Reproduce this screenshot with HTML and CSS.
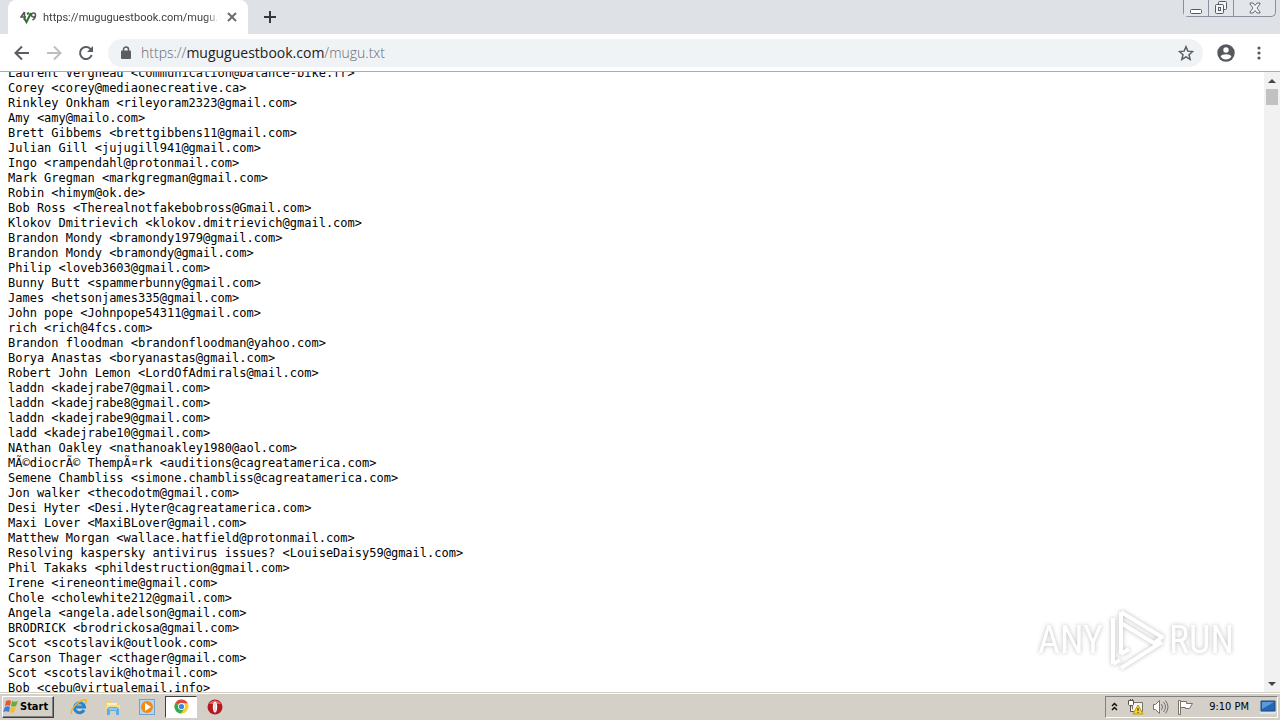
FILE: index.html
```html
<!DOCTYPE html>
<html lang="en">
<head>
  <meta charset="UTF-8">
  <meta name="viewport" content="width=device-width, initial-scale=1.0">
  <title>https://muguguestbook.com/mugu.txt</title>
  <link rel="stylesheet" href="styles.css">
</head>
<body>

  <!-- Tab strip -->
  <header class="tab-strip">
    <div class="tab">
      <svg class="favicon" width="17" height="14" viewBox="0 0 17 14">
        <path d="M4.500 2L1 7h5M4.500 2v8M15.500 5a2 2 0 1 0-4 0 2 2 0 0 0 4 0c0 3-1 4-3 5" fill="none" stroke="#555" stroke-width="1.500"/>
        <path d="M4 8l2.500 4L11 3M7 4l2-1" fill="none" stroke="#28702c" stroke-width="2"/>
      </svg>
      <span class="tab-title">https://muguguestbook.com/mugu.txt</span>
      <button class="icon-btn tab-close" aria-label="Close tab">
        <svg width="10" height="10" viewBox="0 0 10 10"><path d="M1 1l8 8M9 1L1 9" stroke="#6a6d71" stroke-width="2"/></svg>
      </button>
    </div>
    <button class="icon-btn new-tab" aria-label="New tab">
      <svg width="12" height="12" viewBox="0 0 12 12"><path d="M6 0v12M0 6h12" stroke="#35383c" stroke-width="2"/></svg>
    </button>
    <div class="window-buttons">
      <button class="win-btn" aria-label="Minimize">
        <svg width="12" height="14" viewBox="0 0 12 14"><rect x=".5" y="8.500" width="11" height="4" rx="1" fill="#fff" stroke="#555a66"/></svg>
      </button>
      <button class="win-btn" aria-label="Restore">
        <svg width="14" height="14" viewBox="0 0 14 14"><rect x="4.500" y=".5" width="8" height="8" rx="1" fill="#f4f5f7" stroke="#555a66"/><rect x="1.500" y="3.500" width="8" height="9" rx="1" fill="#f4f5f7" stroke="#555a66"/><rect x="4.500" y="6.500" width="2" height="3" fill="none" stroke="#555a66"/></svg>
      </button>
      <button class="win-btn win-close" aria-label="Close">
        <svg width="12" height="12" viewBox="0 0 12 12"><path d="M1 1h3l2 2.500L8 1h3v1L8 6l3 4v1H8L6 8.500 4 11H1v-1l3-4-3-4z" fill="#f4f5f7" stroke="#666b76"/></svg>
      </button>
    </div>
  </header>

  <!-- Toolbar -->
  <nav class="toolbar">
    <button class="icon-btn" aria-label="Back">
      <svg width="16" height="16" viewBox="0 0 16 16"><path d="M15 8H2M8 1.500L1.500 8 8 14.500" fill="none" stroke="#5a5d61" stroke-width="2"/></svg>
    </button>
    <button class="icon-btn" aria-label="Forward" disabled>
      <svg width="16" height="16" viewBox="0 0 16 16"><path d="M1 8h13M8 1.500L14.500 8 8 14.500" fill="none" stroke="#bcbec1" stroke-width="2"/></svg>
    </button>
    <button class="icon-btn" aria-label="Reload">
      <svg width="16" height="16" viewBox="0 0 16 16"><path d="M13.700 10A6 6 0 1 1 12.300 3.800L14 5.500" fill="none" stroke="#5a5d61" stroke-width="2"/><path d="M15 1v6H9z" fill="#5a5d61"/></svg>
    </button>
    <div class="omnibox">
      <svg width="10" height="13" viewBox="0 0 10 13"><path d="M2.500 5V3.500a2.500 2.500 0 0 1 5 0V5" fill="none" stroke="#5a5d61" stroke-width="1.500"/><rect x="0" y="4.500" width="10" height="8.500" rx="1" fill="#5a5d61"/></svg>
      <div class="url" role="textbox" aria-label="Address"><span>https://</span><b>muguguestbook.com</b><span>/mugu.txt</span></div>
      <button class="icon-btn" aria-label="Bookmark this page">
        <svg width="16" height="16" viewBox="0 0 24 24"><path d="M12 2.500l2.800 6.700 7.200.6-5.500 4.700 1.700 7.100-6.200-3.800-6.200 3.800 1.700-7.100L2 9.800l7.200-.6z" fill="none" stroke="#5a5d61" stroke-width="2.200"/></svg>
      </button>
    </div>
    <button class="icon-btn" aria-label="Profile">
      <svg width="18" height="18" viewBox="0 0 18 18"><circle cx="9" cy="9" r="8.700" fill="#55585c"/><circle cx="9" cy="6" r="2.700" fill="#fff"/><path d="M3.600 12.500c1-3 9.800-3 10.800 0-2 4-8.800 4-10.800 0z" fill="#fff"/></svg>
    </button>
    <button class="icon-btn menu" aria-label="Menu">
      <svg width="4" height="14" viewBox="0 0 4 14" fill="#55585c"><circle cx="2" cy="2" r="1.600"/><circle cx="2" cy="7" r="1.600"/><circle cx="2" cy="12" r="1.600"/></svg>
    </button>
  </nav>

  <!-- Text file -->
  <main class="viewport">
    <pre class="document">Laurent Vergneau &lt;communication@balance-bike.fr&gt;
Corey &lt;corey@mediaonecreative.ca&gt;
Rinkley Onkham &lt;rileyoram2323@gmail.com&gt;
Amy &lt;amy@mailo.com&gt;
Brett Gibbems &lt;brettgibbens11@gmail.com&gt;
Julian Gill &lt;jujugill941@gmail.com&gt;
Ingo &lt;rampendahl@protonmail.com&gt;
Mark Gregman &lt;markgregman@gmail.com&gt;
Robin &lt;himym@ok.de&gt;
Bob Ross &lt;Therealnotfakebobross@Gmail.com&gt;
Klokov Dmitrievich &lt;klokov.dmitrievich@gmail.com&gt;
Brandon Mondy &lt;bramondy1979@gmail.com&gt;
Brandon Mondy &lt;bramondy@gmail.com&gt;
Philip &lt;loveb3603@gmail.com&gt;
Bunny Butt &lt;spammerbunny@gmail.com&gt;
James &lt;hetsonjames335@gmail.com&gt;
John pope &lt;Johnpope54311@gmail.com&gt;
rich &lt;rich@4fcs.com&gt;
Brandon floodman &lt;brandonfloodman@yahoo.com&gt;
Borya Anastas &lt;boryanastas@gmail.com&gt;
Robert John Lemon &lt;LordOfAdmirals@mail.com&gt;
laddn &lt;kadejrabe7@gmail.com&gt;
laddn &lt;kadejrabe8@gmail.com&gt;
laddn &lt;kadejrabe9@gmail.com&gt;
ladd &lt;kadejrabe10@gmail.com&gt;
NAthan Oakley &lt;nathanoakley1980@aol.com&gt;
MÃ©diocrÃ© ThempÃ¤rk &lt;auditions@cagreatamerica.com&gt;
Semene Chambliss &lt;simone.chambliss@cagreatamerica.com&gt;
Jon walker &lt;thecodotm@gmail.com&gt;
Desi Hyter &lt;Desi.Hyter@cagreatamerica.com&gt;
Maxi Lover &lt;MaxiBLover@gmail.com&gt;
Matthew Morgan &lt;wallace.hatfield@protonmail.com&gt;
Resolving kaspersky antivirus issues? &lt;LouiseDaisy59@gmail.com&gt;
Phil Takaks &lt;phildestruction@gmail.com&gt;
Irene &lt;ireneontime@gmail.com&gt;
Chole &lt;cholewhite212@gmail.com&gt;
Angela &lt;angela.adelson@gmail.com&gt;
BRODRICK &lt;brodrickosa@gmail.com&gt;
Scot &lt;scotslavik@outlook.com&gt;
Carson Thager &lt;cthager@gmail.com&gt;
Scot &lt;scotslavik@hotmail.com&gt;
Bob &lt;cebu@virtualemail.info&gt;</pre>
    <div class="scrollbar">
      <button class="icon-btn scroll-btn" aria-label="Scroll up"><svg width="8" height="4" viewBox="0 0 8 4"><path d="M0 4l4-4 4 4z" fill="#444"/></svg></button>
      <div class="thumb"></div>
      <button class="icon-btn scroll-btn scroll-down" aria-label="Scroll down"><svg width="8" height="4" viewBox="0 0 8 4"><path d="M0 0l4 4 4-4z" fill="#444"/></svg></button>
    </div>
    <div class="watermark">
      <span>ANY</span>
      <svg width="60" height="64" viewBox="0 0 60 64" fill="none" stroke="#fff" stroke-width="4" stroke-linejoin="round">
        <path d="M15 4v42M15 4l41 25-8 6M15 15l36 22M7 10v46M7 56l7-4M15 46l8-5M15 60l41-26"/>
      </svg>
      <span>RUN</span>
    </div>
  </main>

  <!-- Taskbar -->
  <footer class="taskbar">
    <button class="start">
      <svg width="17" height="16" viewBox="0 0 17 16"><path d="M3 2c2-1 4-1 5 0L7 7c-2-1-3-1-5 0z" fill="#e8562a"/><path d="M9 2c2 1 4 1 6 0l-2 5c-2 1-3 1-5 0z" fill="#6dab3c"/><path d="M2 8c2-1 3-1 5 0l-1 5c-2-1-4-1-6 0z" fill="#3f7fd0"/><path d="M8 8c2 1 3 1 5 0l-2 5c-1 1-3 1-4 0z" fill="#f5bd28"/></svg>
      <span>Start</span>
    </button>
    <div class="quick-launch">
      <button class="app" aria-label="Internet Explorer">
        <svg width="18" height="18" viewBox="0 0 18 18"><path d="M14 12a5 5 0 1 1 .5-3H5" fill="none" stroke="#2583cf" stroke-width="3"/><path d="M2 16C-1 13 7 4 13 2c4-1 4 1 2 4" fill="none" stroke="#e9b62b" stroke-width="1.500"/></svg>
      </button>
      <button class="app" aria-label="Windows Explorer">
        <svg width="18" height="18" viewBox="0 0 18 18"><path d="M2 3h5l1 2h7v9H2z" fill="#edcf72"/><path d="M3 5h10v4H3z" fill="#fff3bd"/><path d="M2 7h14v4H2z" fill="#f5df8e"/><path d="M3 17v-6l2-2h8l2 2v6h-3v-4H6v4z" fill="#5fade0"/><path d="M5 11h8" stroke="#c2e7f5"/></svg>
      </button>
      <button class="app" aria-label="Media Player">
        <svg width="18" height="18" viewBox="0 0 18 18"><rect x="1.500" y="1.500" width="15" height="15" fill="#b6d6ef" stroke="#6fa3cd"/><circle cx="9" cy="9" r="6" fill="#f18b16"/><path d="M7 5l6 4-6 4z" fill="#fff"/></svg>
      </button>
      <button class="app app-active" aria-label="Chrome">
        <svg width="15" height="15" viewBox="0 0 16 16"><circle cx="8" cy="8" r="7.500" fill="#f7cf32"/><path d="M8 8L1.500 4.200A7.500 7.500 0 0 1 14.500 4.500H8z" fill="#dd4b3e"/><path d="M1.500 4.200A7.500 7.500 0 0 0 7.500 15.500L11 10 8 8z" fill="#36a852"/><circle cx="8" cy="8" r="3.700" fill="#fff"/><circle cx="8" cy="8" r="2.800" fill="#4285d8"/></svg>
      </button>
      <button class="app" aria-label="Opera">
        <svg width="16" height="16" viewBox="0 0 16 16"><circle cx="8" cy="8" r="7.500" fill="#b51a20"/><path d="M2 5a7 7 0 0 1 12 0z" fill="#dc6468"/><ellipse cx="8" cy="8" rx="2.200" ry="5.500" fill="#fff"/><path d="M8 4v8" stroke="#e5b5b5"/></svg>
      </button>
    </div>
    <div class="tray">
      <button class="icon-btn" aria-label="Show hidden icons"><svg width="7" height="10" viewBox="0 0 7 10"><path d="M1 4l2.500-2.500L6 4M1 8l2.500-2.500L6 8" fill="none" stroke="#111" stroke-width="1.500"/></svg></button>
      <svg class="network" width="17" height="16" viewBox="0 0 17 16"><path d="M5.500 3.500h10v9h-10z" fill="#f4f2ed" stroke="#77736a"/><path d="M1.500 1.500h5v4l-1 1h-3l-1-1zM3.500 6.500v6h3M3.500 0v2M5.500 0v2" fill="#fff" stroke="#55524c"/><path d="M11 6l5 9H6z" fill="#f9d71c" stroke="#b89a10"/><path d="M11 9v3M11 13v1" stroke="#222"/></svg>
      <svg width="17" height="16" viewBox="0 0 17 16" fill="none" stroke="#77736a"><path d="M1.500 5.500h2l4-4v13l-4-4h-2z" fill="#fff"/><path d="M9.500 5q2 3 0 6M11.500 3q4 5 0 10M13.500 1.500q5 6.500 0 13"/></svg>
      <svg width="17" height="16" viewBox="0 0 17 16"><path d="M1.500 1.500h2v14h-2zM3.500 2.500h6v2h6l-3 5h-4v-1h-5z" fill="#fff" stroke="#77736a"/></svg>
      <time class="clock">9:10 PM</time>
      <button class="icon-btn" aria-label="Show desktop"><svg width="16" height="14" viewBox="0 0 16 14"><path d="M1 1h14v10H1z" fill="#2467b5" stroke="#214b80"/><path d="M2 2h12L2 9z" fill="#5c9ade"/><path d="M0 12h16v2H0z" fill="#d9e4ef"/></svg></button>
    </div>
  </footer>

</body>
</html>
```
FILE: styles.css
```css
* {
  box-sizing: border-box;
}

body {
  margin: 0;
  height: 100vh;
  display: flex;
  flex-direction: column;
  overflow: hidden;
  background: #fff;
  font-family: "Open Sans", "Noto Sans", sans-serif;
}

svg {
  display: block;
  flex: none;
}

button {
  padding: 0;
  font: inherit;
}

.icon-btn {
  display: flex;
  align-items: center;
  justify-content: center;
  flex: none;
  border: 0;
  background: none;
}

/* Tab strip */
.tab-strip {
  display: flex;
  flex: none;
  height: 34px;
  padding-left: 8px;
  background: #dee1e6;
}

.tab {
  display: flex;
  align-items: center;
  width: 240px;
  padding: 0 10px 0 12px;
  border-radius: 8px 8px 0 0;
  background: #fff;
}

.favicon {
  margin-right: 6px;
}

.tab-title {
  flex: 1;
  overflow: hidden;
  white-space: nowrap;
  font-family: "Roboto", sans-serif;
  font-size: 11px;
  color: #3c4043;
  mask-image: linear-gradient(to right, #000 92%, transparent);
}

.tab-close {
  width: 12px;
  margin-left: 6px;
}

.new-tab {
  width: 28px;
  margin-left: 8px;
}

.window-buttons {
  display: flex;
  height: 17px;
  margin: 0 4px 0 auto;
  border: 1px solid #8b8f9b;
  border-top: 0;
  border-radius: 0 0 5px 5px;
}

.win-btn {
  display: flex;
  align-items: center;
  justify-content: center;
  width: 25px;
  border: 0;
  border-right: 1px solid #8b8f9b;
  background: #e2e5ea;
}

.win-close {
  width: 41px;
  border-right: 0;
  border-radius: 0 0 5px 0;
}

/* Toolbar */
.toolbar {
  display: flex;
  align-items: center;
  flex: none;
  gap: 16px;
  height: 38px;
  padding: 0 14px;
  border-bottom: 1px solid #a9abae;
}

.omnibox {
  display: flex;
  flex: 1;
  align-items: center;
  gap: 10px;
  height: 28px;
  margin: 0 -2px;
  padding: 0 9px 0 13px;
  border-radius: 14px;
  background: #f0f3f5;
}

.url {
  flex: 1;
  font-size: 14px;
  font-weight: 300;
  color: #666a6f;
}

.url b {
  font-weight: 400;
  color: #202124;
}

.menu {
  width: 15px;
}

/* Text file */
.viewport {
  position: relative;
  display: flex;
  flex: 1;
  min-height: 0;
  overflow: hidden;
}

.document {
  flex: 1;
  margin: -6px 0 0;
  padding-left: 8px;
  font-family: "DejaVu Sans Mono", monospace;
  font-size: 12px;
  line-height: 15px;
  color: #000;
}

.scrollbar {
  display: flex;
  flex-direction: column;
  width: 16px;
  background: #f1f1f1;
}

.scroll-btn {
  height: 17px;
}

.thumb {
  height: 16px;
  margin: 0 2px;
  background: #c1c1c1;
}

.scroll-down {
  margin-top: auto;
}

.watermark {
  position: absolute;
  right: 46px;
  bottom: 20px;
  display: flex;
  align-items: center;
  gap: 3px;
  font-family: "Roboto Condensed", "Liberation Sans Narrow", "Roboto", sans-serif;
  font-size: 38px;
  color: #fff;
  filter: drop-shadow(0 0 2px #bbb);
}

/* Taskbar */
.taskbar {
  display: flex;
  align-items: center;
  flex: none;
  height: 28px;
  padding: 0 2px;
  border-top: 1px solid #d4d0c8;
  background: #d4d0c8;
  box-shadow: inset 0 1px #fff;
  font-family: "DejaVu Sans Condensed", "DejaVu Sans", sans-serif;
  font-size: 11px;
}

.start {
  display: flex;
  align-items: center;
  width: 52px;
  height: 22px;
  border: 1px solid;
  border-color: #fff #404040 #404040 #fff;
  background: #d4d0c8;
  box-shadow: inset -1px -1px #808080;
  font-weight: bold;
}

.quick-launch {
  display: flex;
  gap: 2px;
  margin-left: 9px;
}

.app {
  display: flex;
  align-items: center;
  justify-content: center;
  width: 32px;
  height: 22px;
  border: 0;
  background: none;
}

.app-active {
  border: 1px solid;
  border-color: #404040 #fff #fff #404040;
  background: #fff;
}

.tray {
  display: flex;
  align-items: center;
  gap: 8px;
  height: 22px;
  margin-left: auto;
  padding: 0 1px 0 5px;
  border: 1px solid;
  border-color: #808080 #fff #fff #808080;
}

.network {
  margin-left: 1px;
}

.clock {
  margin: 0 3px 0 7px;
}
```
